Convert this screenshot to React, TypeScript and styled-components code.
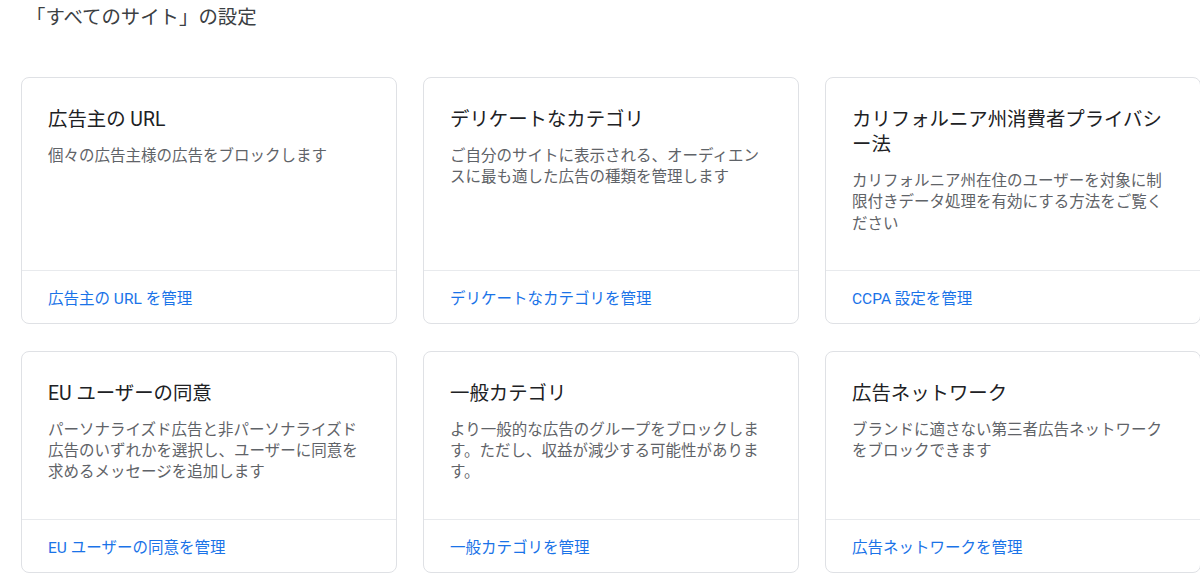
import styled, { createGlobalStyle } from "styled-components";

const Global = createGlobalStyle`
  html, body { margin: 0; padding: 0; background: #fff; }
  body {
    font-family: Roboto, "Noto Sans CJK JP", "Noto Sans", sans-serif;
    color: #202124;
    overflow: hidden;
  }
`;

const Page = styled.main`
  width: 1200px;
  overflow: hidden;
`;

const PageTitle = styled.h1`
  margin: 0;
  padding: 5px 0 0 26px;
  font-size: 19.4px;
  line-height: 25px;
  font-weight: 400;
  color: #3c4043;
`;

const Grid = styled.div`
  display: grid;
  grid-template-columns: repeat(3, 376px);
  gap: 27px 26px;
  padding: 47px 0 0 21px;
`;

const Card = styled.section`
  display: flex;
  flex-direction: column;
  border: 1px solid #dfe1e5;
  border-radius: 8px;
  background: #fff;
`;

const Body = styled.div`
  flex: 1;
  padding: 29px 26px 35px 26px;
`;

const Title = styled.h2`
  margin: 0;
  font-size: 19.4px;
  line-height: 25px;
  font-weight: 400;
  color: #202124;
`;

const Desc = styled.p`
  margin: 14px 0 0;
  font-size: 15.5px;
  line-height: 21.3px;
  color: #5f6368;
`;

const Footer = styled.div`
  height: 52px;
  border-top: 1px solid #e8eaed;
  display: flex;
  align-items: center;
  padding: 0 26px;
`;

const Link = styled.a`
  font-size: 15.5px;
  font-weight: 400;
  color: #1a73e8;
  text-decoration: none;
`;

const cards = [
  {
    title: "広告主の URL",
    desc: "個々の広告主様の広告をブロックします",
    link: "広告主の URL を管理",
  },
  {
    title: "デリケートなカテゴリ",
    desc: "ご自分のサイトに表示される、オーディエンスに最も適した広告の種類を管理します",
    link: "デリケートなカテゴリを管理",
  },
  {
    title: "カリフォルニア州消費者プライバシー法",
    desc: "カリフォルニア州在住のユーザーを対象に制限付きデータ処理を有効にする方法をご覧ください",
    link: "CCPA 設定を管理",
  },
  {
    title: "EU ユーザーの同意",
    desc: "パーソナライズド広告と非パーソナライズド広告のいずれかを選択し、ユーザーに同意を求めるメッセージを追加します",
    link: "EU ユーザーの同意を管理",
  },
  {
    title: "一般カテゴリ",
    desc: "より一般的な広告のグループをブロックします。ただし、収益が減少する可能性があります。",
    link: "一般カテゴリを管理",
  },
  {
    title: "広告ネットワーク",
    desc: "ブランドに適さない第三者広告ネットワークをブロックできます",
    link: "広告ネットワークを管理",
  },
];

export default function App() {
  return (
    <Page>
      <Global />
      <PageTitle>「すべてのサイト」の設定</PageTitle>
      <Grid>
        {cards.map((c) => (
          <Card key={c.title}>
            <Body>
              <Title>{c.title}</Title>
              <Desc>{c.desc}</Desc>
            </Body>
            <Footer>
              <Link href="#">{c.link}</Link>
            </Footer>
          </Card>
        ))}
      </Grid>
    </Page>
  );
}
